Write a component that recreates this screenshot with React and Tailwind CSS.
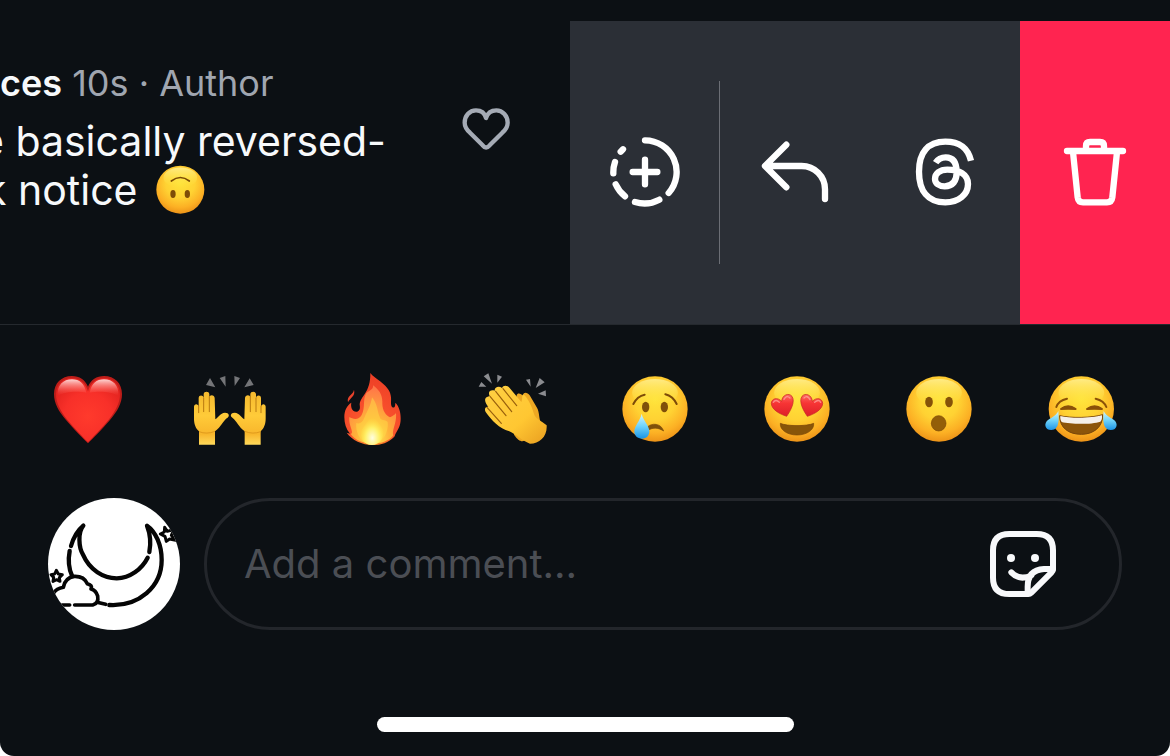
import React from 'react';

function FaceBase({ id, cx, cy, r }) {
  return (
    <>
      <defs>
        <radialGradient id={id} cx="50%" cy="36%" r="68%">
          <stop offset="0" stopColor="#ffe33a" />
          <stop offset="0.45" stopColor="#ffd233" />
          <stop offset="0.75" stopColor="#fcb024" />
          <stop offset="1" stopColor="#e88a14" />
        </radialGradient>
        <linearGradient id={id + '-shine'} x1="0" y1="0" x2="0" y2="1">
          <stop offset="0" stopColor="#fff3a0" stopOpacity="0.75" />
          <stop offset="1" stopColor="#ffe939" stopOpacity="0" />
        </linearGradient>
        <linearGradient id={id + '-tear'} x1="0" y1="0" x2="0" y2="1">
          <stop offset="0" stopColor="#d5f6ff" />
          <stop offset="0.5" stopColor="#6fd3fa" />
          <stop offset="1" stopColor="#1c94e6" />
        </linearGradient>
        <linearGradient id={id + '-love'} x1="0" y1="0" x2="0" y2="1">
          <stop offset="0" stopColor="#ff6a63" />
          <stop offset="0.4" stopColor="#f73535" />
          <stop offset="1" stopColor="#dd1f28" />
        </linearGradient>
      </defs>
      <circle cx={cx} cy={cy} r={r} fill={`url(#${id})`} />
      <ellipse cx={cx} cy={cy - r * 0.5} rx={r * 0.7} ry={r * 0.42} fill={`url(#${id}-shine)`} />
    </>
  );
}

function UpsideDown() {
  return (
    <svg viewBox="469 345 147 147" className="size-[49px] shrink-0" role="img" aria-label="Upside-down face">
      <FaceBase id="upside" cx={542} cy={419} r={72} />
      <path d="M515 393Q542 372 569 393" fill="none" stroke="#7a4a05" strokeWidth="5" strokeLinecap="round" />
      <ellipse cx="520" cy="432" rx="8" ry="12" fill="#7f4c08" />
      <ellipse cx="563" cy="432" rx="8" ry="12" fill="#7f4c08" />
    </svg>
  );
}

function RedHeart() {
  return (
    <svg viewBox="36 39 216 216" className="size-full" aria-hidden="true">
      <defs>
        <radialGradient id="heart-fill" cx="50%" cy="60%" r="62%">
          <stop offset="0" stopColor="#ff3a2c" />
          <stop offset="0.6" stopColor="#f83029" />
          <stop offset="1" stopColor="#e2231f" />
        </radialGradient>
        <linearGradient id="heart-shine" x1="0" y1="0" x2="0" y2="1">
          <stop offset="0" stopColor="#ffe0de" stopOpacity="0.95" />
          <stop offset="0.5" stopColor="#ff8a84" stopOpacity="0.6" />
          <stop offset="1" stopColor="#ff4a40" stopOpacity="0" />
        </linearGradient>
      </defs>
      <path d="M144 250C132 238 100 206 78 180C56 154 42 130 42 102C42 70 64 48 96 48C118 48 136 60 144 80C152 60 170 48 192 48C224 48 246 70 246 102C246 130 232 154 210 180C188 206 156 238 144 250Z" fill="#bd1d19" />
      <path d="M144 246C132 235 103 204 82 179C61 153 48 128 48 102C48 74 68 54 96 54C120 54 137 70 144 94C151 70 168 54 192 54C220 54 240 74 240 102C240 128 227 153 206 179C185 204 156 235 144 246Z" fill="url(#heart-fill)" />
      <path d="M53 108C50 76 70 58 96 58C119 58 133 70 139 98C118 94 76 92 53 108Z" fill="url(#heart-shine)" />
      <path d="M235 108C238 76 218 58 192 58C169 58 155 70 149 98C170 94 212 92 235 108Z" fill="url(#heart-shine)" />
    </svg>
  );
}

function Hand() {
  return (
    <>
      <path d="M477 254V214C466 204 462 190 462 176V140C462 130 475 130 476 140V114C476 104 490 104 491 114V103C491 93 508 93 508 103V112C509 102 524 104 524 114L526 178C536 172 540 159 555 158C568 158 570 169 561 174C549 183 544 200 525 214V254Z" fill="url(#hand-fill)" />
      <path d="M476 138V158M491 114V155M508 110V155" stroke="#b97a10" strokeWidth="3" strokeLinecap="round" fill="none" />
      <path d="M477 215Q500 224 525 214" stroke="#e09a1c" strokeWidth="3" fill="none" />
    </>
  );
}

function RaisedHands() {
  return (
    <svg viewBox="462 39 216 216" className="size-full" aria-hidden="true">
      <defs>
        <linearGradient id="hand-fill" x1="0" y1="0" x2="0" y2="1">
          <stop offset="0" stopColor="#f5b92e" />
          <stop offset="0.45" stopColor="#ffcb39" />
          <stop offset="0.8" stopColor="#f8b62c" />
          <stop offset="1" stopColor="#ffd95a" />
        </linearGradient>
      </defs>
      <Hand />
      <g transform="translate(1139 0) scale(-1 1)">
        <Hand />
      </g>
      <path d="M510 54L526 82L498 75ZM539 54L556 48L557 80ZM583 48L600 54L584 78ZM629 55L641 75L613 82Z" fill="#747578" />
    </svg>
  );
}

function Fire() {
  return (
    <svg viewBox="18 39 216 216" className="size-full" aria-hidden="true">
      <defs>
        <radialGradient id="fire-outer" cx="50%" cy="90%" r="85%">
          <stop offset="0" stopColor="#ff9a2c" />
          <stop offset="0.5" stopColor="#f8502c" />
          <stop offset="1" stopColor="#ee4026" />
        </radialGradient>
        <radialGradient id="fire-mid" cx="50%" cy="92%" r="90%">
          <stop offset="0" stopColor="#fff15a" />
          <stop offset="0.4" stopColor="#ffb23a" />
          <stop offset="1" stopColor="#ff7548" />
        </radialGradient>
        <radialGradient id="fire-core" cx="50%" cy="78%" r="62%">
          <stop offset="0" stopColor="#fffde0" />
          <stop offset="0.5" stopColor="#fff16a" />
          <stop offset="1" stopColor="#ffd83a" stopOpacity="0" />
        </radialGradient>
      </defs>
      <path d="M121 39C132 56 182 76 183 112C184 128 181 136 187 142C195 146 196 135 196 128C208 140 212 158 212 176C212 198 204 208 198 219C194 226 196 226 193 230C176 248 153 255 128 255C96 255 66 240 50 218L60 221C48 207 43 190 43 171C43 151 51 136 64 128C61 142 67 156 80 155C90 153 91 144 89 134C90 108 122 100 121 39Z" fill="url(#fire-outer)" />
      <path d="M54 127C49 106 70 105 72 89C77 109 60 113 54 127Z" fill="#e9432c" />
      <path d="M129 76C146 88 158 104 157 128C156 151 168 168 180 172C190 166 193 166 198 159C201 190 184 211 190 226C166 260 88 260 62 222C74 217 55 199 58 171C68 177 86 182 95 165C107 140 97 119 109 99C120 90 131 88 129 76Z" fill="url(#fire-mid)" />
      <path d="M126 112C143 132 141 152 150 173C155 184 171 178 173 187C177 211 160 254 126 254C93 254 75 216 79 189C88 193 98 187 103 173C112 152 122 138 126 112Z" fill="#ffdb48" opacity="0.5" />
      <path d="M126 158C134 179 153 192 160 211C163 236 147 255 126 255C101 255 89 236 95 211C103 193 119 183 126 158Z" fill="url(#fire-core)" />
    </svg>
  );
}

function Clap() {
  return (
    <svg viewBox="444 39 216 216" className="size-full" aria-hidden="true">
      <defs>
        <linearGradient id="clap-fill" x1="0" y1="0" x2="1" y2="1">
          <stop offset="0" stopColor="#ffd044" />
          <stop offset="0.6" stopColor="#ffc732" />
          <stop offset="1" stopColor="#e99e20" />
        </linearGradient>
      </defs>
      <path d="M560 106C562 98 572 99 580 108C577 96 592 95 599 106L621 143C629 156 626 178 634 189L588 240C576 247 566 244 552 224Z" fill="#eda823" />
      <path d="M579 106L602 144" stroke="#a86808" strokeWidth="3" fill="none" />
      <path d="M479 108C472 94 483 88 494 92C493 81 507 77 516 84C520 74 533 76 539 84L574 126C579 116 574 105 580 103C593 112 608 145 611 159C616 178 634 182 650 196C652 229 629 251 600 251C574 242 558 222 538 214C507 205 486 182 467 156C461 145 469 139 475 141C464 128 461 114 473 110Z" fill="url(#clap-fill)" />
      <path d="M519 86L560 137M497 94L545 155M480 109L528 167M471 142L514 190" stroke="#99600c" strokeWidth="3.5" strokeLinecap="round" fill="none" />
      <path d="M454 66L469 80L446 80ZM461 49L475 40L486 71ZM502 44L516 50L502 68ZM588 59L600 57L602 80ZM629 54L644 67L617 84ZM647 91L648 109L624 101Z" fill="#8b8c90" />
    </svg>
  );
}

function Crying() {
  return (
    <svg viewBox="30 24 216 216" className="size-full" aria-hidden="true">
      <FaceBase id="crying" cx={135} cy={132} r={98} />
      <path d="M70 117Q82 93 104 89M166 88Q188 93 200 117" fill="none" stroke="#7d4b08" strokeWidth="6" strokeLinecap="round" />
      <ellipse cx="107" cy="126" rx="11" ry="16" fill="#80500a" />
      <ellipse cx="163" cy="126" rx="11" ry="16" fill="#80500a" />
      <path d="M112 186C125 173 153 174 161 198C145 188 130 186 114 196Z" fill="#80500a" stroke="#80500a" strokeWidth="2" strokeLinejoin="round" />
      <path d="M95 146C99 166 118 182 118 199C118 213 109 221 96 221C83 221 73 213 73 199C73 183 90 168 95 146Z" fill="url(#crying-tear)" />
    </svg>
  );
}

function HeartEyes() {
  return (
    <svg viewBox="456 24 216 216" className="size-full" aria-hidden="true">
      <FaceBase id="love" cx={561} cy={132} r={98} />
      <path d="M530 154C508 147 484 133 484 115C484 102 501 94 515 109C516 90 536 82 546 94C557 110 541 138 530 154Z" fill="url(#love-love)" stroke="#c32222" strokeWidth="2" />
      <path d="M592 154C614 147 638 133 638 115C638 102 621 94 607 109C606 90 586 82 576 94C565 110 581 138 592 154Z" fill="url(#love-love)" stroke="#c32222" strokeWidth="2" />
      <path d="M490 112Q497 101 508 112M522 103Q530 89 540 99M600 104Q592 89 582 99M614 112Q626 101 632 112" fill="none" stroke="#ffaaa2" strokeWidth="4" strokeLinecap="round" opacity="0.7" />
      <path d="M511 175C530 184 592 184 611 175C613 195 590 210 561 210C532 210 509 195 511 175Z" fill="#885509" stroke="#774407" strokeWidth="2" strokeLinejoin="round" />
    </svg>
  );
}

function Surprised() {
  return (
    <svg viewBox="27 24 216 216" className="size-full" aria-hidden="true">
      <FaceBase id="wow" cx={132} cy={132} r={98} />
      <ellipse cx="102" cy="111" rx="11.5" ry="15.5" fill="#865208" />
      <ellipse cx="162" cy="111" rx="11.5" ry="15.5" fill="#865208" />
      <ellipse cx="131" cy="175" rx="22" ry="23" fill="#935e08" stroke="#794606" strokeWidth="2" />
    </svg>
  );
}

function Joy() {
  return (
    <svg viewBox="453 24 216 216" className="size-full overflow-visible" aria-hidden="true">
      <FaceBase id="joy" cx={559} cy={132} r={98} />
      <path d="M484 126Q490 107 516 101M602 101Q627 107 634 126" fill="none" stroke="#8b5108" strokeWidth="6" strokeLinecap="round" />
      <path d="M498 132Q519 116 542 132Q519 130 498 132ZM576 132Q599 116 621 132Q599 130 576 132Z" fill="#8b5108" stroke="#8b5108" strokeWidth="6" strokeLinejoin="round" />
      <path d="M494 152C525 160 592 159 623 149C624 186 596 208 559 208C520 208 494 188 494 152Z" fill="#8c550a" stroke="#77450a" strokeWidth="3" />
      <path d="M496 153C525 161 592 160 621 151C622 162 620 166 616 170C588 179 527 178 500 171C497 167 495 161 496 153Z" fill="#f5f0ea" />
      <path d="M490 138C492 162 494 194 469 195C448 195 446 173 460 164C472 157 484 151 490 138Z" fill="url(#joy-tear)" />
      <path d="M626 138C624 162 622 194 647 195C668 195 670 173 656 164C644 157 632 151 626 138Z" fill="url(#joy-tear)" />
    </svg>
  );
}

const reactions = [
  ['Red heart', RedHeart],
  ['Raising hands', RaisedHands],
  ['Fire', Fire],
  ['Clapping hands', Clap],
  ['Crying face', Crying],
  ['Heart eyes', HeartEyes],
  ['Surprised face', Surprised],
  ['Tears of joy', Joy],
];

function ActionIcon({ viewBox, children }) {
  return (
    <svg viewBox={viewBox} className="h-[71px] w-[72px]" fill="none" stroke="#fff" strokeWidth="19" strokeLinecap="round" strokeLinejoin="round" aria-hidden="true">
      {children}
    </svg>
  );
}

function Action({ label, danger, children }) {
  return (
    <button type="button" aria-label={label} className={`flex w-[150px] items-center justify-center ${danger ? 'bg-[#ff2450]' : 'bg-[#2b2f36]'}`}>
      {children}
    </button>
  );
}

function Comment() {
  return (
    <article className="flex min-h-[303px] border-b border-[#25292e] box-content">
      <div className="flex min-w-0 flex-1 justify-between overflow-hidden pt-[38px] pr-[60px]">
        <div className="min-w-0 whitespace-nowrap">
          <p className="text-[36px] leading-[48px] text-[#a0a6b0]">
            <span className="font-semibold text-[#f7f9fb]">ces</span> 10s · Author
          </p>
          <p className="mt-[10px] text-[41px] leading-[48px] text-[#f7f9fb]">
            <span className="-ml-5 block">e basically reversed-</span>
            <span className="-ml-4 flex items-center gap-[18px]">k notice <UpsideDown /></span>
          </p>
        </div>
        <button type="button" aria-label="Like" className="mt-12 h-[44px] w-12 shrink-0">
          <svg viewBox="66 51 144 132" className="size-full" fill="none" stroke="#a5abb5" strokeWidth="13" strokeLinejoin="round" aria-hidden="true">
            <path d="M138 84C134 68 122 61 108 61C88 61 74 78 74 98C74 110 80 119 90 128L128 166Q138 179 149 166L187 128C197 119 203 110 203 98C203 78 188 61 169 61C155 61 143 68 138 84Z" />
          </svg>
        </button>
      </div>
      <div className="flex shrink-0 bg-[#2b2f36]">
        <Action label="Add to story">
          <ActionIcon viewBox="507 141 216 213">
            <path d="M615 151A95 95 0 0 1 686 309M658 329A95 95 0 0 1 585 336M555 319A95 95 0 0 1 527 283M520 250A95 95 0 0 1 525 216M542 185L549 178M615 209V283M578 246H652" />
          </ActionIcon>
        </Action>
        <div className="my-[60px] -ml-px w-px bg-[#6b6e75]" />
        <Action label="Reply">
          <ActionIcon viewBox="57 51 216 213">
            <path d="M139 74L75 138L139 202M75 138H185A70 70 0 0 1 255 208V237" />
          </ActionIcon>
        </Action>
        <Action label="Share to Threads">
          <ActionIcon viewBox="507 51 216 213">
            <path strokeLinecap="butt" d="M693 122C683 83 659 65 616 65C563 65 537 98 537 155C537 213 564 247 616 247C656 247 684 224 684 192C684 163 657 149 622 149C599 149 585 161 585 177C585 190 597 199 614 199C638 199 650 184 650 157C650 127 639 112 617 112C603 112 594 117 587 128" />
          </ActionIcon>
        </Action>
        <Action label="Delete" danger>
          <ActionIcon viewBox="957 51 216 213">
            <path d="M981 93H1149M1038 92V78Q1038 66 1050 66H1080Q1092 66 1092 78V92M999 96L1013 232Q1015 247 1029 247H1101Q1115 247 1117 232L1131 96" />
          </ActionIcon>
        </Action>
      </div>
    </article>
  );
}

function Avatar() {
  return (
    <svg viewBox="24 24 396 396" className="size-[132px] shrink-0 rounded-full bg-white" fill="none" stroke="#050505" strokeWidth="13" strokeLinecap="round" strokeLinejoin="round" role="img" aria-label="Your profile picture">
      <path d="M93 168C100 144 112 122 130 107C113 127 116 172 129 194C149 240 190 265 230 265C270 264 305 238 323 203" />
      <path d="M89 183C84 210 86 235 96 257" />
      <path d="M328 186C333 160 330 130 321 107C347 125 365 165 365 210C365 290 297 350 208 345" />
      <path strokeWidth="11" d="M104 345H158Q177 340 173 318Q168 301 153 297Q159 286 142 281Q132 258 103 259Q75 263 70 292Q49 297 42 307M66 345H89M171 337L197 343" />
      <path strokeWidth="9" d="M49 241L55 252L67 254L58 263L60 274L50 269L39 274L41 262L33 254L44 252Z" />
      <path strokeWidth="9" d="M374 112L382 124L402 118L394 136L407 151L389 147L379 154L375 139L361 132L373 126Z" />
    </svg>
  );
}

function StickerIcon() {
  return (
    <svg viewBox="60 123 198 198" className="size-full" fill="none" stroke="#f8f9fb" strokeWidth="18" strokeLinecap="round" strokeLinejoin="round" aria-hidden="true">
      <path d="M118 132H200Q249 132 249 181V237Q249 243 244 248L184 308Q180 312 174 312H118Q69 312 69 263V181Q69 132 118 132Z" />
      <path d="M249 237H222Q173 240 173 290V311M124 247Q149 273 184 256" />
      <circle cx="123" cy="204" r="12" fill="#f8f9fb" stroke="none" />
      <circle cx="195" cy="204" r="12" fill="#f8f9fb" stroke="none" />
    </svg>
  );
}

export default function App() {
  return (
    <div className="bg-white font-['Inter','Liberation_Sans',sans-serif]">
      <main className="flex min-h-screen flex-col rounded-b-[14px] bg-[#0c1014] pt-[21px] pb-6">
        <Comment />
        <div className="mt-12 flex justify-between px-[52px]">
          {reactions.map(([label, Icon]) => (
            <button key={label} type="button" aria-label={label} className="size-[72px]">
              <Icon />
            </button>
          ))}
        </div>
        <form className="mt-[53px] flex items-center gap-6 px-12" onSubmit={(e) => e.preventDefault()}>
          <Avatar />
          <div className="flex h-[132px] min-w-0 flex-1 items-center rounded-full border-3 border-[#23262b] pr-[63px] pl-[37px]">
            <input type="text" aria-label="Add a comment" placeholder="Add a comment…" className="min-w-0 flex-1 bg-transparent text-[40px] leading-[48px] text-[#f7f9fb] outline-none placeholder:text-[#4b4e54]" />
            <button type="button" aria-label="Stickers" className="size-[66px] shrink-0">
              <StickerIcon />
            </button>
          </div>
        </form>
        <div className="mx-auto mt-auto h-[15px] w-[417px] rounded-full bg-white" />
      </main>
    </div>
  );
}
